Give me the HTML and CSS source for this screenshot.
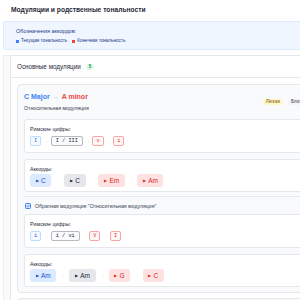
FILE: index.html
```html
<!DOCTYPE html>
<html lang="ru">
<head>
<meta charset="utf-8">
<title>Модуляции</title>
<link rel="stylesheet" href="styles.css">
</head>
<body>
<div class="page">
  <h1 class="title">Модуляции и родственные тональности</h1>
  <div class="legend">
    <div class="legend-title">Обозначения аккордов:</div>
    <div class="legend-row">
      <span class="legend-item"><span class="sq sq-blue"></span>Текущая тональность</span>
      <span class="legend-item"><span class="sq sq-red"></span>Конечная тональность</span>
    </div>
  </div>
  <div class="wrap">
    <section class="panel">
      <div class="panel-head">Основные модуляции <span class="count">5</span></div>
      <div class="panel-body">
        <div class="mod">
          <div class="mod-head">
            <div class="mod-info">
              <div class="mod-title"><span class="k-from">C Major</span><span class="arr">→</span><span class="k-to">A minor</span></div>
              <div class="mod-sub">Относительная модуляция</div>
            </div>
            <div class="badges"><span class="badge yellow">Лёгкая</span><span class="badge gray">Близкая</span></div>
          </div>
          <div class="box">
            <div class="box-label">Римские цифры:</div>
            <div class="row">
              <span class="num blue">I</span><span class="sep">→</span>
              <span class="num pivot">I / III</span><span class="sep">→</span>
              <span class="num red">v</span><span class="sep">→</span>
              <span class="num red">i</span>
            </div>
          </div>
          <div class="box box-chords">
            <div class="box-label">Аккорды:</div>
            <div class="row">
              <span class="chord c-blue"><span class="play">▶</span>C</span><span class="sep">→</span>
              <span class="chord c-gray"><span class="play">▶</span>C</span><span class="sep">→</span>
              <span class="chord c-red"><span class="play">▶</span>Em</span><span class="sep">→</span>
              <span class="chord c-red"><span class="play">▶</span>Am</span>
            </div>
          </div>
          <div class="reverse">
            <div class="toggle">
              <svg class="check" width="6" height="6" viewBox="0 0 6 6"><rect x="0.5" y="0.5" width="5" height="5" rx="0.8" fill="#dbeafe" stroke="#3b82f6"/><path d="M1.6 3.1 L2.6 4 L4.4 2" fill="none" stroke="#2563eb" stroke-width="0.8"/></svg>
              <span>Обратная модуляция "Относительная модуляция"</span>
            </div>
            <div class="box">
              <div class="box-label">Римские цифры:</div>
              <div class="row">
                <span class="num blue">i</span><span class="sep">→</span>
                <span class="num pivot">i / vi</span><span class="sep">→</span>
                <span class="num red">V</span><span class="sep">→</span>
                <span class="num red">I</span>
              </div>
            </div>
            <div class="box box-chords">
              <div class="box-label">Аккорды:</div>
              <div class="row">
                <span class="chord c-blue"><span class="play">▶</span>Am</span><span class="sep">→</span>
                <span class="chord c-gray"><span class="play">▶</span>Am</span><span class="sep">→</span>
                <span class="chord c-red"><span class="play">▶</span>G</span><span class="sep">→</span>
                <span class="chord c-red"><span class="play">▶</span>C</span>
              </div>
            </div>
          </div>
        </div>
        <div class="mod mod-next"></div>
      </div>
    </section>
  </div>
</div>
</body>
</html>
```
FILE: styles.css
```css
html, body {
  margin: 0;
  padding: 0;
  background: #ffffff;
  overflow: hidden;
}
body {
  font-family: "Liberation Sans", Arial, sans-serif;
  color: #1f2937;
}
.page {
  width: 328px;
  margin-left: 3px;
}
.title {
  margin: 0;
  padding: 6px 0 0 8px;
  font-size: 6.7px;
  line-height: 8px;
  font-weight: 700;
  color: #1f2937;
}
.legend {
  margin-top: 7px;
  background: #eff6ff;
  border: 1px solid #dbeafe;
  border-radius: 3px;
  padding: 6px 12px 4px;
}
.legend-title {
  font-size: 5.5px;
  line-height: 7px;
  color: #1e3a8a;
  font-weight: 500;
}
.legend-row {
  margin-top: 2px;
  display: flex;
  gap: 5px;
  font-size: 4.6px;
  line-height: 8px;
  color: #1e3a8a;
}
.legend-item {
  display: flex;
  align-items: center;
  gap: 2px;
}
.sq {
  width: 3px;
  height: 3px;
  display: inline-block;
}
.sq-blue { background: #3b82f6; }
.sq-red { background: #ef4444; }

.wrap {
  border-left: 1px solid #eceef1;
  border-top: 1px solid #eceef1;
  background: #fafafa;
  padding: 0 6px 0 6px;
  margin-top: 5px;
}
.panel {
  background: #ffffff;
  border: 1px solid #e5e7eb;
  border-bottom: 0;
  margin-top: -1px;
  border-radius: 3px 3px 0 0;
}
.panel-head {
  display: flex;
  align-items: center;
  gap: 5px;
  padding: 7px 6px 6px;
  font-size: 6.3px;
  line-height: 8px;
  color: #1f2937;
  border-bottom: 1px solid #e5e7eb;
}
.count {
  display: inline-flex;
  align-items: center;
  justify-content: center;
  height: 6px;
  padding: 0 3px;
  border-radius: 3px;
  background: #dcfce7;
  color: #15803d;
  font-size: 4.5px;
  font-weight: 700;
}
.panel-body {
  padding: 6px 6px 0;
  display: flex;
  flex-direction: column;
  gap: 5px;
}
.mod {
  background: #f8fafc;
  border: 1px solid #e5e7eb;
  border-radius: 4px;
  padding: 7px 6px 5px;
}
.mod-next {
  height: 20px;
}
.mod-head {
  display: flex;
  justify-content: space-between;
  align-items: center;
  margin-bottom: 7px;
}
.mod-title {
  display: flex;
  align-items: center;
  gap: 3px;
  font-size: 7px;
  line-height: 10px;
  font-weight: 700;
}
.k-from { color: #3b82f6; }
.k-to { color: #ef4444; }
.arr { color: #9ca3af; font-weight: 400; font-size: 6px; }
.mod-sub {
  margin-top: 2px;
  font-size: 5.2px;
  line-height: 8px;
  color: #374151;
}
.badges {
  display: flex;
  gap: 5px;
  align-items: center;
}
.badge {
  height: 6px;
  line-height: 6px;
  padding: 0 3px;
  border-radius: 3px;
  font-size: 4.5px;
}
.badge.yellow { background: #fef9c3; color: #854d0e; }
.badge.gray { background: #f3f4f6; color: #374151; }

.box {
  background: #ffffff;
  border: 1px solid #e5e7eb;
  border-radius: 3px;
  padding: 5px 5px 6px;
}
.box + .box { margin-top: 6px; }
.box-chords { padding: 5px 5px 4px; }
.box-label {
  font-size: 5.3px;
  line-height: 8px;
  color: #1f2937;
  margin-bottom: 3px;
}
.box-chords .box-label { margin-bottom: 1px; }
.row {
  display: flex;
  align-items: center;
  gap: 2.5px;
}
.sep {
  color: #9ca3af;
  font-size: 4.5px;
}
.num {
  box-sizing: border-box;
  height: 10px;
  min-width: 10px;
  display: inline-flex;
  align-items: center;
  justify-content: center;
  padding: 0 3px;
  border: 1px solid;
  border-radius: 2px;
  font-family: "Liberation Mono", "DejaVu Sans Mono", monospace;
  font-size: 5.3px;
}
.num.blue { border-color: #bfdbfe; background: #f5f9ff; color: #2563eb; }
.num.red { border-color: #fca5a5; background: #fff7f7; color: #dc2626; }
.num.pivot { border-color: #b5b9c0; background: #f9fafb; color: #1f2937; padding: 0 4px; border-radius: 2px; }

.chord {
  height: 13px;
  display: inline-flex;
  align-items: center;
  gap: 2.5px;
  padding: 0 5.5px;
  border-radius: 3px;
  font-size: 6.5px;
  font-weight: 500;
}
.row .chord + .sep { margin: 0 1.5px; }
.play { font-size: 3.5px; }
.c-blue { background: #dbeafe; color: #1d4ed8; }
.c-gray { background: #e5e7eb; color: #1f2937; padding: 0 6px; }
.c-red { background: #fee2e2; color: #dc2626; }

.reverse {
  margin-top: 4px;
  border-top: 1px solid #e5e7eb;
  padding-top: 5px;
}
.toggle {
  display: flex;
  align-items: center;
  gap: 4px;
  padding-left: 1px;
  font-size: 5.2px;
  line-height: 8px;
  color: #374151;
  margin-bottom: 4px;
}
.check { display: block; }
```
